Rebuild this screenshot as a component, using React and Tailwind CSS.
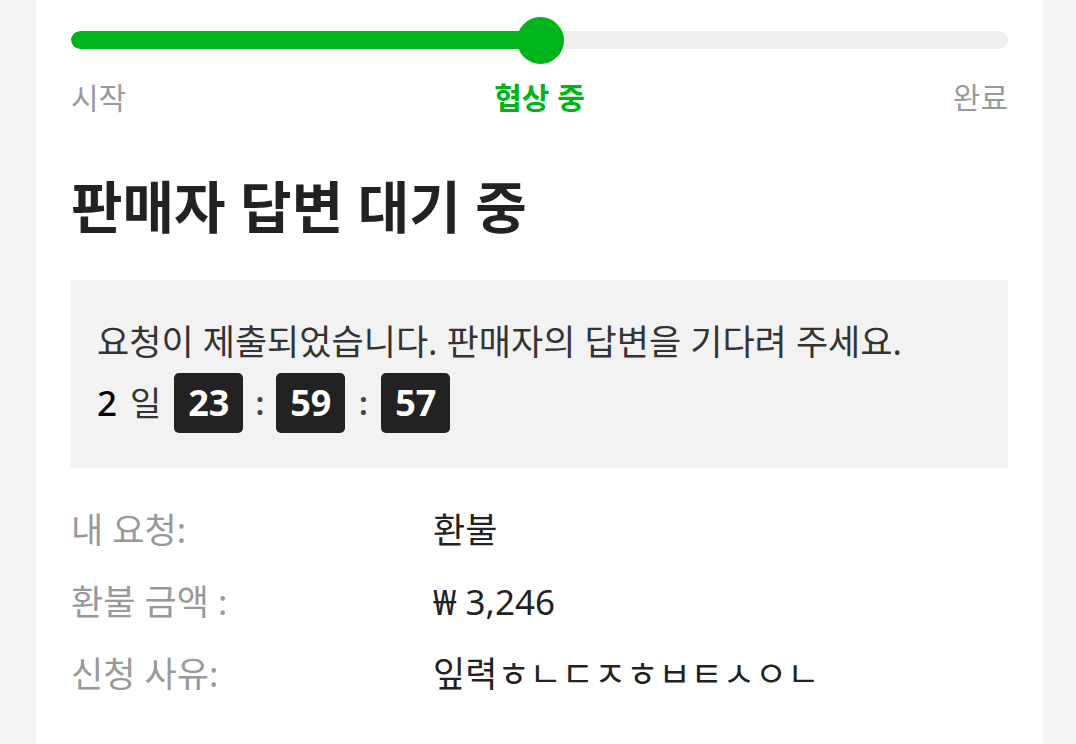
export default function App() {
  const font = { fontFamily: '"Noto Sans", "Noto Sans CJK KR", sans-serif' };
  const box = "w-[69px] h-[60px] rounded-[5px] bg-[#222222] text-white font-bold text-[36px] flex items-center justify-center";
  return (
    <div className="min-h-[744px] w-full bg-[#f5f5f5] overflow-hidden" style={font}>
      <div className="ml-[36px] mr-[33px] mt-[-12px] bg-white rounded-2xl px-[35px] pt-[28px] pb-[80px]">
        {/* progress */}
        <div className="relative h-[48px] flex items-center">
          <div className="w-full h-[18px] rounded-full bg-[#eeeeee] overflow-hidden">
            <div className="h-full w-[50%] bg-[#00b51a] rounded-full"></div>
          </div>
          <div className="absolute left-[446px] top-[1px] w-[47px] h-[47px] rounded-full bg-[#00b51a]"></div>
        </div>
        <div className="flex justify-between items-center mt-[16px] text-[30px] leading-[36px]">
          <span className="text-[#999999]">시작</span>
          <span className="text-[#00b51a] font-bold">협상 중</span>
          <span className="text-[#999999]">완료</span>
        </div>
        <h1 className="mt-[58px] text-[56px] leading-[64px] font-bold text-[#222222]">판매자 답변 대기 중</h1>
        <div className="mt-[42px] bg-[#f2f2f2] px-[26px] pt-[40px] pb-[35px]">
          <p className="text-[35px] leading-[44px] text-[#333333]">요청이 제출되었습니다. 판매자의 답변을 기다려 주세요.</p>
          <div className="mt-[9px] flex items-center">
            <span className="text-[35px] leading-[60px] font-medium text-black">2</span>
            <span className="ml-[13px] text-[34px] text-[#333333]">일</span>
            <span className={"ml-[13px] " + box}>23</span>
            <span className="w-[33px] text-center text-[32px] font-semibold text-[#444444]">:</span>
            <span className={box}>59</span>
            <span className="w-[36px] text-center text-[32px] font-semibold text-[#444444]">:</span>
            <span className={box}>57</span>
          </div>
        </div>
        <div className="mt-[40px] flex flex-col gap-[28px] text-[35px] leading-[44px]">
          <div className="flex">
            <span className="w-[362px] text-[#999999]">내 요청:</span>
            <span className="text-[#222222]">환불</span>
          </div>
          <div className="flex">
            <span className="w-[362px] text-[#999999]">환불 금액 :</span>
            <span className="text-[#222222]">₩ 3,246</span>
          </div>
          <div className="flex">
            <span className="w-[362px] text-[#999999]">신청 사유:</span>
            <span className="text-[#222222]">잎력ㅎㄴㄷㅈㅎㅂㅌㅅㅇㄴ</span>
          </div>
        </div>
      </div>
    </div>
  );
}
